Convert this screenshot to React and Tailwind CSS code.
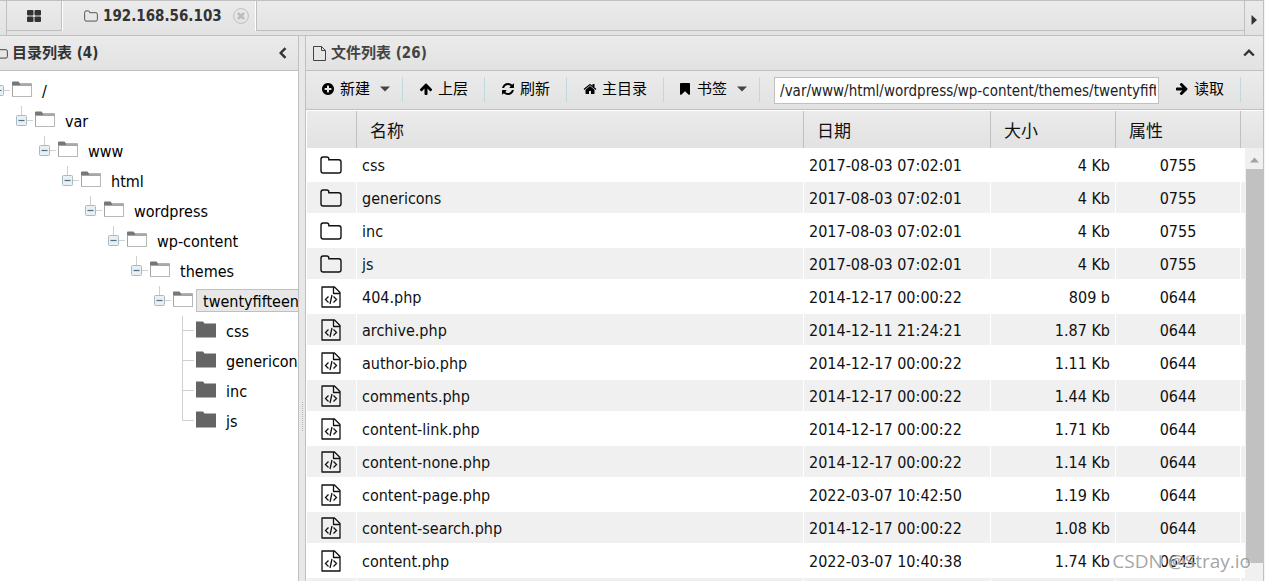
import React from "react";

const FONT = "font-['DejaVu_Sans_Condensed','Noto_Sans_CJK_SC',sans-serif]";
const BAR = "bg-linear-to-b from-[#ebebeb] to-[#e2e2e2]";

const GLYPHS = {
  plus: "M1344 960v-128q0-26-19-45t-45-19h-256v-256q0-26-19-45t-45-19h-128q-26 0-45 19t-19 45v256h-256q-26 0-45 19t-19 45v128q0 26 19 45t45 19h256v256q0 26 19 45t45 19h128q26 0 45-19t19-45v-256h256q26 0 45-19t19-45zm320-64q0 209-103 385.5t-279.5 279.5-385.5 103-385.5-103-279.5-279.5-103-385.5 103-385.5 279.5-279.5 385.5-103 385.5 103 279.5 279.5 103 385.5z",
  up: "M1675 971q0 51-37 90l-75 75q-38 38-91 38-54 0-90-38l-294-293v704q0 52-37.5 84.5t-90.5 32.5h-128q-53 0-90.5-32.5t-37.5-84.5v-704l-294 293q-36 38-90 38t-90-38l-75-75q-38-38-38-90 0-53 38-91l651-651q35-37 90-37 54 0 91 37l651 651q37 39 37 91z",
  refresh: "M1639 1056q0 5-1 7-64 268-268 434.5t-478 166.5q-146 0-282.5-55t-243.5-157l-129 129q-19 19-45 19t-45-19-19-45v-448q0-26 19-45t45-19h448q26 0 45 19t19 45-19 45l-137 137q71 66 161 102t187 36q134 0 250-65t186-179q11-17 53-117 8-23 30-23h192q13 0 22.5 9.5t9.5 22.5zm25-800v448q0 26-19 45t-45 19h-448q-26 0-45-19t-19-45 19-45l138-138q-148-137-349-137-134 0-250 65t-186 179q-11 17-53 117-8 23-30 23h-199q-13 0-22.5-9.5t-9.5-22.5v-7q65-268 270-434.5t480-166.5q146 0 284 55.5t245 156.5l130-129q19-19 45-19t45 19 19 45z",
  home: "M1472 992v480q0 26-19 45t-45 19h-384v-384h-256v384h-384q-26 0-45-19t-19-45v-480q0-1 .5-3t.5-3l575-474 575 474q1 2 1 6zm223-69l-62 74q-8 9-21 11h-3q-13 0-21-7l-692-577-692 577q-12 8-24 7-13-2-21-11l-62-74q-8-10-7-23.5t11-21.5l719-599q32-26 76-26t76 26l244 204v-195q0-14 9-23t23-9h192q14 0 23 9t9 23v408l219 182q10 8 11 21.5t-7 23.5z",
  bookmark: "M1420 128q23 0 44 9 33 13 52.5 41t19.5 62v1289q0 34-19.5 62t-52.5 41q-19 8-44 8-48 0-83-32l-441-424-441 424q-36 33-83 33-23 0-44-9-33-13-52.5-41t-19.5-62v-1289q0-34 19.5-62t52.5-41q21-9 44-9h1048z",
};

function Glyph({ name, className = "" }) {
  return (
    <svg viewBox="0 0 1792 1792" className={`size-[14px] shrink-0 ${className}`} fill="currentColor" aria-hidden="true">
      <path d={GLYPHS[name]} />
    </svg>
  );
}

function FolderOutline({ className }) {
  return (
    <svg viewBox="0 0 22 18" className={className} fill="none" stroke="currentColor" strokeWidth="1.4" aria-hidden="true">
      <path d="M1 3.2C1 1.9 1.8 1 3.1 1h3.6c1.3 0 2.1.8 2.1 2.1v.7h10c1.300 0 2.200.9 2.200 2.200v8.800c0 1.300-.9 2.200-2.200 2.200H3.200C1.900 17 1 16.100 1 14.800z" />
    </svg>
  );
}

function FileOutline({ className }) {
  return (
    <svg viewBox="0 0 13 15" className={className} fill="none" stroke="currentColor" aria-hidden="true">
      <path d="M.5.5h8l4 4v10H.5zM8.500.5v4h4" />
    </svg>
  );
}

function CodeFile() {
  return (
    <svg viewBox="0 0 20 22" className="h-[22px] w-5" fill="none" stroke="#111" strokeWidth="1.3" aria-hidden="true">
      <path d="M1 1h12.500l5.500 5.500V21H1zM12.500 1v6.500H19" strokeLinejoin="round" />
      <path d="M7.500 10.500L4.500 13.500l3 3M12.500 10.500l3 3-3 3M11 9l-2 9" />
    </svg>
  );
}

function Caret() {
  return (
    <svg viewBox="0 0 10 6" className="ml-[5px] h-[6px] w-[10px]" fill="#444" aria-hidden="true">
      <path d="M0 .5h10L5 5.500z" />
    </svg>
  );
}

function TreeFolder({ open }) {
  return (
    <svg viewBox="0 0 20 17" className="h-[17px] w-5 shrink-0" aria-hidden="true">
      {open ? (
        <>
          <path d="M0 1.500Q0 .5 1 .5h5.500l1.500 2h11.500v3H0z" fill="#777" />
          <path d="M.5 4.500h19v11H.5z" fill="#fff" stroke="#a4a4a4" />
          <path d="M1 15.500h18.500v-10" fill="none" stroke="#b8b8b8" />
          <path d="M8 2.500h12v1.500H8z" fill="#aaa" />
        </>
      ) : (
        <path d="M0 .5h7l1.500 2H20v14H0z" fill="#646464" />
      )}
    </svg>
  );
}

function Connector({ open, root, last }) {
  if (open) {
    return (
      <button type="button" aria-label="折叠" className="h-[30px] w-[21px] shrink-0">
        <svg viewBox="0 0 21 30" className="block h-[30px] w-[21px]" fill="none">
          {!root && <path d="M7.500 0v9" stroke="#d0d0d0" />}
          <path d="M13 14.500h6" stroke="#d0d0d0" />
          <rect x="2.500" y="9.500" width="10" height="10" rx="1" fill="#e9eff3" stroke="#a9bac4" />
          <path d="M4.500 14.500h6" stroke="#4a7186" strokeWidth="1.200" />
        </svg>
      </button>
    );
  }
  return (
    <svg viewBox="0 0 21 30" className="h-[30px] w-[21px] shrink-0" fill="none" stroke="#d0d0d0" aria-hidden="true">
      <path d={last ? "M7.500 0v14.500H19" : "M7.500 0v30M7.500 14.500H19"} />
    </svg>
  );
}

const TREE = {
  name: "/",
  children: [{ name: "var", children: [{ name: "www", children: [{ name: "html", children: [{ name: "wordpress", children: [{ name: "wp-content", children: [{ name: "themes", children: [{ name: "twentyfifteen", selected: true, children: [{ name: "css" }, { name: "genericons" }, { name: "inc" }, { name: "js" }] }] }] }] }] }] }] }],
};

function TreeNode({ node, root, last }) {
  const open = Boolean(node.children);
  return (
    <li>
      <div className="flex h-[30px] items-start whitespace-nowrap">
        <Connector open={open} root={root} last={last} />
        <span className="pt-[5px]">
          <TreeFolder open={open} />
        </span>
        <a
          href="#"
          className={`mt-[3px] ml-[3px] h-[23px] min-w-[160px] border px-[6px] text-base leading-[23px] ${node.selected ? "border-[#c0c0c0] bg-[#e7e7e7]" : "border-transparent"}`}
        >
          {node.name}
        </a>
      </div>
      {open && (
        <ul className="pl-[23px]">
          {node.children.map((child, i) => (
            <TreeNode key={child.name} node={child} last={i === node.children.length - 1} />
          ))}
        </ul>
      )}
    </li>
  );
}

const D17 = "2017-08-03 07:02:01";
const D14 = "2014-12-17 00:00:22";
const FILES = [
  ["css", D17, "4 Kb", "0755"],
  ["genericons", D17, "4 Kb", "0755"],
  ["inc", D17, "4 Kb", "0755"],
  ["js", D17, "4 Kb", "0755"],
  ["404.php", D14, "809 b", "0644"],
  ["archive.php", "2014-12-11 21:24:21", "1.87 Kb", "0644"],
  ["author-bio.php", D14, "1.11 Kb", "0644"],
  ["comments.php", D14, "1.44 Kb", "0644"],
  ["content-link.php", D14, "1.71 Kb", "0644"],
  ["content-none.php", D14, "1.14 Kb", "0644"],
  ["content-page.php", "2022-03-07 10:42:50", "1.19 Kb", "0644"],
  ["content-search.php", D14, "1.08 Kb", "0644"],
  ["content.php", "2022-03-07 10:40:38", "1.74 Kb", "0644"],
  ["", "", "", ""],
];

function Separator() {
  return <span className="h-[25px] w-px shrink-0 bg-[#c1d8de]" />;
}

function ToolButton({ icon, iconClass, label, menu }) {
  return (
    <button type="button" className={`flex shrink-0 items-center gap-[5px] text-[15px] leading-[24px] text-black ${menu ? "pr-3 pl-[14px]" : "px-4"}`}>
      <Glyph name={icon} className={iconClass} />
      {label}
      {menu && <Caret />}
    </button>
  );
}

function Tabs() {
  return (
    <div className={`flex h-9 shrink-0 border-y border-[#c0c0c0] ${BAR}`}>
      <div className="w-[7px] border-r border-[#c0c0c0]" />
      <div className="flex h-[30px]">
        <button type="button" aria-label="主页" className="flex w-[55px] items-center justify-center border-r border-b border-[#c0c0c0]">
          <svg viewBox="0 0 14 12" className="h-3 w-[14px]" fill="#333" aria-hidden="true">
            <rect width="6.500" height="5.500" rx="1" />
            <rect x="7.500" width="6.500" height="5.500" rx="1" />
            <rect y="6.500" width="6.500" height="5.500" rx="1" />
            <rect x="7.500" y="6.500" width="6.500" height="5.500" rx="1" />
          </svg>
        </button>
        <div className="flex items-center border-x border-white pr-[6px] pl-[21px]">
          <FolderOutline className="h-3 w-[14px] text-[#444]" />
          <span className="ml-[5px] text-[15px] font-bold text-[#333]">192.168.56.103</span>
          <button type="button" aria-label="关闭" className="ml-[11px]">
            <svg viewBox="0 0 16 16" className="size-4" fill="none" stroke="#bdbdbd" aria-hidden="true">
              <circle cx="8" cy="8" r="7.400" />
              <path d="M5 5l6 6M11 5l-6 6" strokeWidth="2.600" />
            </svg>
          </button>
        </div>
      </div>
      <div className="h-[30px] flex-1 border-b border-l border-[#c0c0c0]" />
      <button type="button" aria-label="向右滚动" className="flex w-[19px] items-center justify-center border-l border-[#c0c0c0]">
        <svg viewBox="0 0 6 10" className="mt-1 h-[10px] w-[6px]" fill="#333" aria-hidden="true">
          <path d="M.5 0L6 5 .5 10z" />
        </svg>
      </button>
    </div>
  );
}

function Sidebar() {
  return (
    <aside className="flex w-[299px] shrink-0 flex-col overflow-hidden border-r border-[#c0c0c0]">
      <header className={`flex h-[35px] shrink-0 items-center border-b border-[#c0c0c0] pr-[9px] text-[#333] ${BAR}`}>
        <FolderOutline className="-ml-[6px] h-3 w-[14px] shrink-0" />
        <h2 className="ml-1 flex-1 text-[15px] leading-5 font-bold">目录列表 (4)</h2>
        <button type="button" aria-label="收起">
          <svg viewBox="0 0 12 12" className="size-3" fill="none" stroke="#333" strokeWidth="2.400" aria-hidden="true">
            <path d="M8.500 1.200L3.700 6l4.800 4.800" />
          </svg>
        </button>
      </header>
      <nav className="min-h-0 flex-1 overflow-hidden bg-white pt-[5px]">
        <ul className="-ml-[9px] text-black">
          <TreeNode node={TREE} root />
        </ul>
      </nav>
    </aside>
  );
}

function ScrollBar() {
  return (
    <div className="absolute top-[37px] right-0 bottom-0 flex w-[18px] flex-col bg-[#f0f0f0] pb-[18px] pl-[1px]" aria-hidden="true">
      <svg viewBox="0 0 17 20" className="h-[21px] w-[17px] shrink-0" fill="#a3a3a3">
        <path d="M4 14l4.500-5 4.500 5z" />
      </svg>
      <div className="flex-1 bg-[#c1c1c1]" />
    </div>
  );
}

function FileTable() {
  const th = "border-r border-[#c0c0c0] px-[13px] pt-[2px] text-left text-[17px] leading-6 font-normal";
  const td = "border-r border-white px-[5px]";
  const text = `${td} pt-[2px]`;
  return (
    <div className="relative min-h-0 flex-1 overflow-hidden border-t border-white bg-white pl-px">
      <table className="w-full table-fixed border-separate border-spacing-0 text-base text-[#111]">
        <colgroup>
          <col className="w-[50px]" />
          <col />
          <col className="w-[187px]" />
          <col className="w-[125px]" />
          <col className="w-[125px]" />
          <col className="w-[22px]" />
        </colgroup>
        <thead>
          <tr className={`h-[37px] ${BAR}`}>
            <th className={th} aria-label="类型" />
            <th className={th}>名称</th>
            <th className={th}>日期</th>
            <th className={th}>大小</th>
            <th className={th}>属性</th>
            <th aria-label="滚动" />
          </tr>
        </thead>
        <tbody>
          {FILES.map(([name, date, size, mode], i) => (
            <tr key={i} className="h-[33px] leading-6 *:border-y *:border-y-white even:*:bg-[#f0f0f0]">
              <td className="border-r border-white pr-[2px]">
                <span className="flex justify-center">
                  {name && (i < 4 ? <FolderOutline className="h-[18px] w-[22px]" /> : <CodeFile />)}
                </span>
              </td>
              <td className={text}>{name}</td>
              <td className={text}>{date}</td>
              <td className={`${text} text-right`}>{size}</td>
              <td className={`${text} text-center`}>{mode}</td>
              <td />
            </tr>
          ))}
        </tbody>
      </table>
      <ScrollBar />
    </div>
  );
}

function FilesPanel() {
  return (
    <main className="flex min-w-0 flex-1 flex-col overflow-hidden border-l border-[#c0c0c0]">
      <header className={`flex h-[35px] shrink-0 items-center border-b border-[#c0c0c0] pr-2 pl-[7px] text-[#444] ${BAR}`}>
        <FileOutline className="h-[15px] w-[13px]" />
        <h2 className="ml-[5px] flex-1 text-[15px] leading-5 font-bold">文件列表 (26)</h2>
        <button type="button" aria-label="收起">
          <svg viewBox="0 0 12 12" className="size-3" fill="none" stroke="#333" strokeWidth="2.400" aria-hidden="true">
            <path d="M1.200 8.500L6 3.700l4.800 4.800" />
          </svg>
        </button>
      </header>
      <div className={`flex h-[39px] shrink-0 items-start border-b border-[#c0c0c0] pt-[6px] pr-[22px] pl-px ${BAR}`}>
        <ToolButton icon="plus" label="新建" menu />
        <Separator />
        <ToolButton icon="up" label="上层" />
        <Separator />
        <ToolButton icon="refresh" label="刷新" />
        <Separator />
        <ToolButton icon="home" label="主目录" />
        <Separator />
        <ToolButton icon="bookmark" label="书签" menu />
        <Separator />
        <input
          aria-label="路径"
          defaultValue="/var/www/html/wordpress/wp-content/themes/twentyfifteen/"
          className="ml-[14px] h-[27px] min-w-0 flex-1 border border-[#c0c0c0] bg-white pr-[2px] pl-[5px] text-[15px] text-[#222] outline-none"
        />
        <ToolButton icon="up" iconClass="rotate-90" label="读取" />
        <Separator />
      </div>
      <FileTable />
    </main>
  );
}

export default function App() {
  return (
    <div className={`relative h-screen overflow-hidden bg-[#f4f4f4] pr-px ${FONT}`}>
      <div className="flex h-full flex-col border-r border-[#c0c0c0] bg-[#e8e8e8]">
        <Tabs />
        <div className="flex min-h-0 flex-1">
          <Sidebar />
          <div className="flex w-[6px] shrink-0 items-center justify-center pt-[216px]">
            <span className="h-[29px] border-l border-dotted border-[#b8b8b8]" />
          </div>
          <FilesPanel />
        </div>
      </div>
      <div className="pointer-events-none absolute right-[14px] bottom-2 font-['Open_Sans','Noto_Sans',sans-serif] text-[19px] leading-6 text-[#8c8c8c]/80 [text-shadow:1px_1px_0_#ffffffb0]">
        CSDN @Stray.io
      </div>
    </div>
  );
}
